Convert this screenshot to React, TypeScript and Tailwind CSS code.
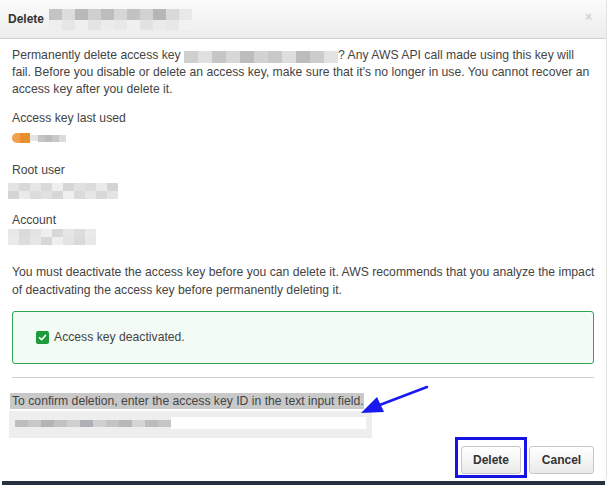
import React from 'react';

// blurred (redacted) values, drawn as rows of grey pixels
const titleBlurTop = ['#c4c4c4', '#dcdcdc', '#b9b9b9', '#cfcfcf', '#bdbdbd', '#d6d6d6', '#c2c2c2', '#d2d2d2', '#b6b6b6', '#d9d9d9', '#e8e8e8'];
const titleBlurBottom = ['#eeeeee', '#e6e6e6', '#efefef', '#e4e4e4', '#ececec', '#e8e8e8', '#f0f0f0', '#e2e2e2', '#ebebeb', '#e7e7e7', '#f2f2f2'];
const keyBlur = ['#cfcfcf', '#e0e0e0', '#c6c6c6', '#d8d8d8', '#bdbdbd', '#d2d2d2', '#c9c9c9', '#dedede', '#bcbcbc', '#cccccc', '#e2e2e2'];
const rootBlur = ['#e4e4e4', '#d9d9d9', '#e6e6e6', '#dadada', '#efefef', '#d6d6d6', '#e1e1e1', '#dcdcdc', '#eaeaea', '#d4d4d4'];
const accountBlur = ['#e8e8e8', '#dadada', '#e3e3e3', '#efefef', '#d8d8d8', '#e6e6e6', '#dddddd', '#eaeaea'];
const inputBlur = ['#bdbdbd', '#c8c8c8', '#b4b4b4', '#c2c2c2', '#cfcfcf', '#aeb0b8', '#d0d0d0', '#c4c4c4', '#b7b7b7', '#d4d4d4', '#bcbcbc', '#c6c6c6'];

function Blur({colors, cell, h}: {colors: string[]; cell: number; h: number}) {
    return (
        <span className="inline-flex align-middle">
            {colors.map((c, i) => (
                <span key={i} style={{background: c, width: cell, height: h}}/>
            ))}
        </span>
    );
}

export default function App() {
    return (
        <div className="relative h-[485px] w-[611px] overflow-hidden bg-white font-['Liberation_Sans',Arial,sans-serif]">
            <div className="flex h-[481px] w-[607px] flex-col rounded-br-[5px] border-r border-[#e2e2e2] bg-white">
                {/* Header */}
                <div className="flex h-[39px] shrink-0 items-center border-b border-[#cfcfcf] bg-gradient-to-b from-[#fbfbfb] to-[#ececec] pl-[8px] pr-[14px]">
                    <span className="text-[12px] font-bold text-[#333]">Delete</span>
                    <span className="ml-[5px] flex flex-col">
                        <Blur colors={titleBlurTop} cell={13} h={11}/>
                        <Blur colors={titleBlurBottom} cell={13} h={10}/>
                    </span>
                    <span className="ml-auto -mt-[4px] text-[12px] font-bold text-[#d2d2d2]">×</span>
                </div>

                {/* Body */}
                <div className="flex flex-col px-[12px] pt-[8px] text-[12.2px] leading-[17px] text-[#444]">
                    <p>
                        Permanently delete access key{' '}
                        <span className="inline-block h-[12px] align-[-1px] leading-[0]">
                            <Blur colors={keyBlur} cell={14} h={12}/>
                        </span>? Any AWS API call made using this key will
                        fail. Before you disable or delete an access key, make sure that it's no longer in use. You
                        cannot recover an access key after you delete it.
                    </p>

                    <div className="mt-[12px]">Access key last used</div>
                    <div className="mt-[4px] flex h-[14px] items-center">
                        <span className="h-[10px] w-[8px] rounded-l-full bg-[#f0a050]"/>
                        <span className="h-[10px] w-[10px] bg-[#e8902f]"/>
                        <span className="h-[6px] w-[8px] bg-[#e4e4e4]"/>
                        <Blur colors={['#c4c4c4', '#bcbcbc', '#c8c8c8', '#dcdcdc']} cell={7} h={7}/>
                    </div>

                    <div className="mt-[17px]">Root user</div>
                    <div className="-ml-[4px] mt-[4px] flex flex-col">
                        <Blur colors={rootBlur} cell={11} h={8}/>
                        <Blur colors={rootBlur.slice().reverse()} cell={11} h={8}/>
                    </div>

                    <div className="mt-[13px]">Account</div>
                    <div className="-ml-[4px] flex flex-col">
                        <Blur colors={accountBlur} cell={11} h={8}/>
                        <Blur colors={accountBlur.slice().reverse()} cell={11} h={8}/>
                    </div>

                    <p className="-mr-[6px] mt-[18px] leading-[18px]">
                        You must deactivate the access key before you can delete it. AWS recommends that you analyze
                        the impact of deactivating the access key before permanently deleting it.
                    </p>

                    <div className="mt-[12px] flex h-[53px] items-center rounded-[3px] border border-[#2ea44f] bg-[#f3fbf5] pl-[23px]">
                        <span className="flex h-[13px] w-[13px] items-center justify-center rounded-[2px] bg-[#1d9a3a]">
                            <svg viewBox="0 0 12 12" className="h-[9px] w-[9px]">
                                <path d="M2 6.3 L4.8 9 L10 3.2" fill="none" stroke="white" strokeWidth="2.2" strokeLinecap="round" strokeLinejoin="round"/>
                            </svg>
                        </span>
                        <span className="ml-[5px]">Access key deactivated.</span>
                    </div>

                    <div className="mt-[13px] border-t border-[#d0d0d0]"/>

                    <div className="mt-[15px]">
                        <span className="-ml-[2px] bg-[#c9c9c9] py-[1px] pl-[2px]">
                            To confirm deletion, enter the access key ID in the text input field.
                        </span>
                    </div>
                    <div className="-ml-[3px] mt-[1px] w-[363px] bg-[#eeeeee] px-[6px] pb-[9px] pt-[6px]">
                        <div className="flex h-[12px] items-center bg-white">
                            <span className="flex h-full items-center bg-[#eeeeee]">
                                <Blur colors={inputBlur} cell={13} h={7}/>
                            </span>
                        </div>
                    </div>

                    {/* Buttons */}
                    <div className="-mt-[1px] flex items-start justify-end gap-[2px]">
                        <div className="flex h-[41px] w-[72px] justify-center border-[3px] border-[#1414e6] pt-[6px]">
                            <button className="h-[28px] w-[60px] rounded-[3px] border border-[#c6c6c6] bg-gradient-to-b from-white to-[#eaeaea] text-[12px] font-bold text-[#333]">
                                Delete
                            </button>
                        </div>
                        <button className="mt-[9px] h-[28px] w-[65px] rounded-[3px] border border-[#c6c6c6] bg-gradient-to-b from-white to-[#eaeaea] text-[12px] font-bold text-[#333]">
                            Cancel
                        </button>
                    </div>
                </div>
            </div>

            {/* dark backdrop edge below the dialog */}
            <div className="ml-[2px] h-[4px] w-[603px] bg-[#263040]"/>

            {/* annotation arrow */}
            <svg className="pointer-events-none absolute left-[355px] top-[383px]" width="80" height="36" viewBox="0 0 80 36">
                <line x1="72" y1="4" x2="22" y2="23" stroke="#1a1af0" strokeWidth="2.5" strokeLinecap="round"/>
                <polygon points="6,30 22,14 29,29" fill="#1a1af0"/>
            </svg>
        </div>
    );
}
